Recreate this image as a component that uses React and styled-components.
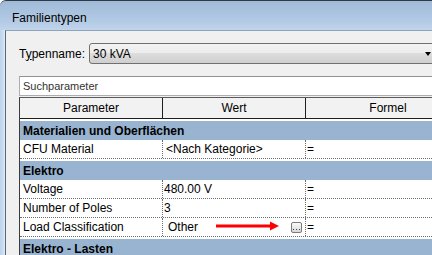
import React from "react";
import styled, { createGlobalStyle } from "styled-components";

const GlobalStyle = createGlobalStyle`
  html, body {
    margin: 0;
    padding: 0;
    background: #ffffff;
    overflow: hidden;
  }
  body {
    font-family: "Liberation Sans", Arial, sans-serif;
    font-size: 12px;
    color: #000000;
  }
`;

const Window = styled.div`
  width: 432px;
  height: 255px;
  overflow: hidden;
  display: flex;
  flex-direction: column;
  box-sizing: border-box;
  border-top: 1px solid #2f3a47;
  border-top-left-radius: 6px;
  background: linear-gradient(180deg, #9fbad8 0px, #b3cae4 20px, #c2d6ec 30px, #c6daef 100%);
`;

const TitleBar = styled.div`
  height: 29px;
  box-sizing: border-box;
  flex: none;
  display: flex;
  align-items: center;
  padding: 5px 0 0 12px;
  font-size: 12px;
`;

const Body = styled.div`
  flex: 1;
  display: flex;
  min-height: 0;
`;

const GlassEdge = styled.div`
  width: 5px;
  flex: none;
  background: linear-gradient(90deg, #bcd3eb 0%, #c8dcf1 60%, #e4eef9 100%);
`;

const Client = styled.div`
  flex: 1;
  min-width: 0;
  overflow: hidden;
  background: #f0f0f0;
  border-left: 1px solid #56657a;
  border-top: 1px solid #8ea3bb;
  padding: 12px 0 0 13px;
`;

const Inner = styled.div`
  width: 419px;
`;

const TypeRow = styled.div`
  display: flex;
  align-items: center;
  height: 21px;
`;

const Label = styled.div`
  width: 70px;
  flex: none;
`;

const Combo = styled.div`
  flex: 1;
  height: 21px;
  box-sizing: border-box;
  border: 1px solid #707070;
  border-radius: 3px;
  background: linear-gradient(180deg, #f3f3f3 0%, #ececec 48%, #dddddd 50%, #cfcfcf 100%);
  display: flex;
  align-items: center;
  justify-content: space-between;
  padding: 0 6px 0 3px;
`;

const ComboArrow = styled.span`
  width: 0;
  height: 0;
  border-left: 3px solid transparent;
  border-right: 3px solid transparent;
  border-top: 4px solid #000000;
`;

const Search = styled.div`
  margin-top: 12px;
  height: 20px;
  box-sizing: border-box;
  border: 1px solid #abadb3;
  border-top-color: #8f9297;
  background: #ffffff;
  display: flex;
  align-items: center;
  padding-left: 3px;
  font-size: 11px;
  color: #333333;
`;

const Table = styled.div`
  margin-top: 1px;
  width: 460px;
  border-left: 1px solid #3c3c3c;
  border-top: 1px solid #5a5a5a;
  background: #ffffff;
`;

const Grid = styled.div`
  display: grid;
  grid-template-columns: 143px 143px 1fr;
`;

const HeaderRow = styled(Grid)`
  height: 21px;
  box-sizing: border-box;
  border-bottom: 1px solid #1e1e1e;
  background: #f2f2f2;
`;

const HeaderCell = styled.div`
  display: flex;
  align-items: center;
  justify-content: center;
  box-sizing: border-box;
  border-right: ${(p) => (p.$last ? "none" : "1px solid #1e1e1e")};
  padding-right: ${(p) => (p.$last ? "10px" : "0")};
`;

const GroupRow = styled.div`
  height: 21px;
  box-sizing: border-box;
  border-top: 2px solid #ffffff;
  background: #99b4d1;
  font-weight: bold;
  display: flex;
  align-items: center;
  padding-left: 3px;
`;

const DataRow = styled(Grid)`
  height: 19px;
  box-sizing: border-box;
  border-bottom: 1px dotted #6e6e6e;
`;

const Cell = styled.div`
  position: relative;
  display: flex;
  align-items: center;
  justify-content: space-between;
  box-sizing: border-box;
  border-right: ${(p) => (p.$last ? "none" : "1px dotted #6e6e6e")};
  padding-left: ${(p) => p.$pad || 3}px;
  white-space: nowrap;
`;

const DotsButton = styled.span`
  width: 11px;
  height: 11px;
  box-sizing: border-box;
  margin-right: 3px;
  border: 1px solid #7a7a7a;
  border-radius: 2px;
  background: linear-gradient(180deg, #fbfbfb 0%, #e9e9e9 50%, #d8d8d8 100%);
  display: flex;
  align-items: flex-end;
  justify-content: center;
  padding-bottom: 2px;
`;

const Annotation = styled.svg`
  position: absolute;
  left: 53px;
  top: 3px;
`;

const rows = [
  { group: "Materialien und Oberflächen" },
  { name: "CFU Material", value: "<Nach Kategorie>", pad: 3 },
  { group: "Elektro" },
  { name: "Voltage", value: "480.00 V", pad: 1 },
  { name: "Number of Poles", value: "3", pad: 1 },
  { name: "Load Classification", value: "Other", pad: 5, picker: true },
  { group: "Elektro - Lasten" },
];

export default function App() {
  return (
    <>
      <GlobalStyle />
      <Window>
        <TitleBar>Familientypen</TitleBar>
        <Body>
          <GlassEdge />
          <Client>
            <Inner>
              <TypeRow>
                <Label>
                  T<u>y</u>penname:
                </Label>
                <Combo>
                  <span>30 kVA</span>
                  <ComboArrow />
                </Combo>
              </TypeRow>
              <Search>Suchparameter</Search>
              <Table>
                <HeaderRow>
                  <HeaderCell>Parameter</HeaderCell>
                  <HeaderCell>Wert</HeaderCell>
                  <HeaderCell $last>Formel</HeaderCell>
                </HeaderRow>
                {rows.map((row, index) =>
                  row.group ? (
                    <GroupRow key={index}>{row.group}</GroupRow>
                  ) : (
                    <DataRow key={index}>
                      <Cell>{row.name}</Cell>
                      <Cell $pad={row.pad}>
                        <span>{row.value}</span>
                        {row.picker && (
                          <>
                            <Annotation width="64" height="10" viewBox="0 0 64 10">
                              <rect x="0" y="3.5" width="56" height="3" fill="#ff0000" />
                              <polygon points="54,0.5 63,5 54,9.5" fill="#ff0000" />
                            </Annotation>
                            <DotsButton>
                              <svg width="7" height="1" viewBox="0 0 7 1">
                                <rect x="0" y="0" width="1" height="1" fill="#404040" />
                                <rect x="3" y="0" width="1" height="1" fill="#404040" />
                                <rect x="6" y="0" width="1" height="1" fill="#404040" />
                              </svg>
                            </DotsButton>
                          </>
                        )}
                      </Cell>
                      <Cell $last $pad={1}>=</Cell>
                    </DataRow>
                  )
                )}
              </Table>
            </Inner>
          </Client>
        </Body>
      </Window>
    </>
  );
}
